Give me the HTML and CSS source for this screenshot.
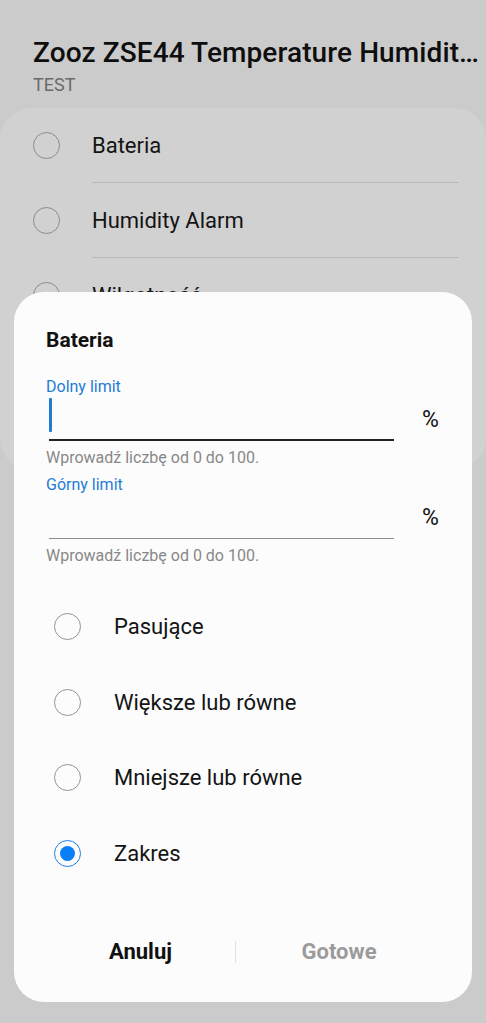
FILE: index.html
```html
<!DOCTYPE html>
<html lang="pl">
<head>
    <meta charset="UTF-8">
    <meta name="viewport" content="width=device-width, initial-scale=1.0">
    <title>Bateria</title>
    <link rel="stylesheet" href="styles.css">
</head>
<body>
    <div class="page">
        <header class="header">
            <h1 class="title">Zooz ZSE44 Temperature Humidity Sensor</h1>
            <div class="subtitle">TEST</div>
        </header>
        <div class="card">
            <div class="row"><span class="circle"></span><span class="row-text">Bateria</span></div>
            <div class="row"><span class="circle"></span><span class="row-text">Humidity Alarm</span></div>
            <div class="row"><span class="circle"></span><span class="row-text">Wilgotność</span></div>
        </div>
    </div>

    <div class="dialog">
        <div class="dialog-title">Bateria</div>

        <div class="field">
            <div class="field-label">Dolny limit</div>
            <div class="field-row">
                <div class="field-input focused"><span class="cursor"></span></div>
                <span class="unit">%</span>
            </div>
            <div class="field-help">Wprowadź liczbę od 0 do 100.</div>
        </div>

        <div class="field">
            <div class="field-label">Górny limit</div>
            <div class="field-row">
                <div class="field-input"></div>
                <span class="unit">%</span>
            </div>
            <div class="field-help">Wprowadź liczbę od 0 do 100.</div>
        </div>

        <div class="options">
            <div class="option"><span class="radio"></span><span class="option-text">Pasujące</span></div>
            <div class="option"><span class="radio"></span><span class="option-text">Większe lub równe</span></div>
            <div class="option"><span class="radio"></span><span class="option-text">Mniejsze lub równe</span></div>
            <div class="option"><span class="radio checked"></span><span class="option-text">Zakres</span></div>
        </div>

        <div class="buttons">
            <button class="btn">Anuluj</button>
            <span class="btn-divider"></span>
            <button class="btn disabled">Gotowe</button>
        </div>
    </div>
</body>
</html>
```

FILE: styles.css
```css
* {
    box-sizing: border-box;
    margin: 0;
    padding: 0;
}
body {
    width: 486px;
    height: 1023px;
    overflow: hidden;
    position: relative;
    background-color: #cbcbcb;
    font-family: Roboto, "Noto Sans", sans-serif;
    color: #111;
}
.header {
    padding: 37px 4px 0 33px;
}
.title {
    font-size: 28px;
    font-weight: 500;
    line-height: 32px;
    letter-spacing: 0.1px;
    white-space: nowrap;
    overflow: hidden;
    text-overflow: ellipsis;
    color: #0e0e0e;
}
.subtitle {
    font-size: 18px;
    line-height: 22px;
    color: #6a6a6a;
    margin-top: 5px;
}
.card {
    margin-top: 12px;
    height: 362px;
    background-color: #d1d1d1;
    border-radius: 32px;
    overflow: hidden;
}
.row {
    display: flex;
    align-items: center;
    height: 75px;
    padding-left: 33px;
}
.circle {
    width: 27px;
    height: 27px;
    border: 1.5px solid #8a8a8a;
    border-radius: 50%;
    flex-shrink: 0;
}
.row-text {
    flex: 1;
    margin-left: 32px;
    margin-right: 27px;
    height: 75px;
    line-height: 76px;
    font-size: 22px;
    border-bottom: 1px solid #b9b9b9;
    color: #141414;
}

.dialog {
    position: absolute;
    top: 292px;
    left: 14px;
    right: 14px;
    background-color: #fcfcfc;
    border-radius: 30px;
    padding: 35px 30px 36px 32px;
}
.dialog-title {
    font-size: 21px;
    font-weight: 700;
    line-height: 26px;
    margin-bottom: 24px;
}
.field {
    margin-bottom: 7px;
}
.field-label {
    font-size: 16px;
    line-height: 20px;
    color: #1f7bd4;
}
.field-row {
    display: flex;
    align-items: center;
}
.field-input {
    width: 345px;
    height: 44px;
    margin-left: 3px;
    border-bottom: 1px solid #8c8c8c;
    display: flex;
    align-items: flex-start;
}
.field-input.focused {
    height: 44px;
    border-bottom: 2px solid #222;
}
.cursor {
    width: 2.5px;
    height: 34px;
    margin-top: 1px;
    background-color: #1f7bd4;
    border-radius: 1px;
}
.unit {
    margin-left: 28px;
    font-size: 23px;
    color: #111;
}
.field-help {
    margin-top: 7px;
    font-size: 16px;
    line-height: 20px;
    color: #888;
}
.options {
    margin-top: 23px;
}
.option {
    display: flex;
    align-items: center;
    height: 75.5px;
}
.radio {
    width: 27px;
    height: 27px;
    margin-left: 7.5px;
    border: 1.5px solid #939393;
    border-radius: 50%;
    flex-shrink: 0;
    display: flex;
    align-items: center;
    justify-content: center;
}
.radio.checked {
    border-color: #1a7fe6;
}
.radio.checked::after {
    content: "";
    width: 15px;
    height: 15px;
    border-radius: 50%;
    background-color: #0a7ff5;
}
.option-text {
    margin-left: 33.5px;
    font-size: 22px;
    color: #141414;
}
.buttons {
    display: grid;
    grid-template-columns: 189px 1px 1fr;
    align-items: center;
    margin-top: 47px;
}
.btn {
    background: none;
    border: none;
    font-family: inherit;
    font-size: 22px;
    font-weight: 700;
    line-height: 28px;
    color: #111;
    text-align: center;
}
.btn.disabled {
    color: #9b9b9b;
}
.btn-divider {
    height: 22px;
    background-color: #e2e2e2;
}
```
